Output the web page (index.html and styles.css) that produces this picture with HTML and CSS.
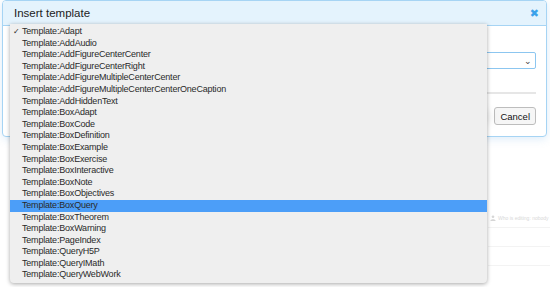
FILE: index.html
```html
<!DOCTYPE html>
<html lang="en">
<head>
    <meta charset="UTF-8">
    <title>Insert template</title>
    <link rel="stylesheet" href="styles.css">
</head>
<body>
    <!-- page behind the dialog -->
    <div class="page">
        <div class="row editing">
            <svg width="6" height="6" viewBox="0 0 8 8"><circle cx="4" cy="2.3" r="1.8" fill="#d6d6d6"/><path d="M0.5 8 C0.5 5 7.5 5 7.5 8 Z" fill="#d6d6d6"/></svg>
            Who is editing: nobody
        </div>
        <div class="row"></div>
        <div class="row"></div>
    </div>

    <!-- dialog -->
    <div class="dialog">
        <div class="dialog-header">
            <span class="title">Insert template</span>
            <span class="close">&#x2716;</span>
        </div>
        <div class="dialog-body">
            <div class="select"><span class="chev">&#x2304;</span></div>
            <div class="rule"></div>
            <div class="buttons">
                <button class="btn btn-insert">Insert</button>
                <button class="btn">Cancel</button>
            </div>
        </div>
        <div class="blur"></div>
    </div>

    <!-- open select menu -->
    <ul class="menu">
        <li class="checked">Template:Adapt</li>
        <li>Template:AddAudio</li>
        <li>Template:AddFigureCenterCenter</li>
        <li>Template:AddFigureCenterRight</li>
        <li>Template:AddFigureMultipleCenterCenter</li>
        <li>Template:AddFigureMultipleCenterCenterOneCaption</li>
        <li>Template:AddHiddenText</li>
        <li>Template:BoxAdapt</li>
        <li>Template:BoxCode</li>
        <li>Template:BoxDefinition</li>
        <li>Template:BoxExample</li>
        <li>Template:BoxExercise</li>
        <li>Template:BoxInteractive</li>
        <li>Template:BoxNote</li>
        <li>Template:BoxObjectives</li>
        <li class="hover">Template:BoxQuery</li>
        <li>Template:BoxTheorem</li>
        <li>Template:BoxWarning</li>
        <li>Template:PageIndex</li>
        <li>Template:QueryH5P</li>
        <li>Template:QueryIMath</li>
        <li>Template:QueryWebWork</li>
    </ul>
</body>
</html>
```

FILE: styles.css
```css
body {
    margin: 0;
    width: 550px;
    height: 287px;
    overflow: hidden;
    background: #fff;
    font-family: "Liberation Sans", Arial, sans-serif;
    position: relative;
}
.page {
    padding-top: 209px;
    padding-left: 488px;
}
.page .row {
    height: 18px;
    border-bottom: 1px solid #f3f3f3;
    font-size: 5px;
    color: #d8d8d8;
    display: flex;
    align-items: center;
    gap: 2px;
    padding-left: 2px;
    white-space: nowrap;
}
.dialog {
    position: absolute;
    left: 2px;
    top: 0;
    width: 543px;
    height: 135px;
    background: #fff;
    border: 1px solid #a6d4f4;
    border-radius: 4px;
    box-shadow: 0 2px 8px rgba(120, 180, 230, 0.25);
    overflow: hidden;
}
.dialog-header {
    height: 24px;
    background: #e4f3fd;
    border-bottom: 1px solid #a6d4f4;
    display: flex;
    align-items: center;
    justify-content: space-between;
    padding: 0 7px 0 11px;
}
.dialog-header .title {
    font-size: 11.5px;
    color: #222;
}
.dialog-header .close {
    font-size: 11px;
    font-weight: bold;
    color: #3ba1ea;
    font-family: "DejaVu Sans", sans-serif;
}
.dialog-body {
    padding: 26px 10px 0 12px;
}
.select {
    height: 15px;
    border: 1px solid #8cc6f0;
    border-radius: 2px;
    display: flex;
    justify-content: flex-end;
    align-items: center;
    padding-right: 3px;
}
.select .chev {
    font-size: 9px;
    color: #444;
    line-height: 6px;
}
.rule {
    margin-top: 23px;
    border-top: 2px solid #e6e6e6;
}
.buttons {
    margin-top: 13px;
    display: flex;
    justify-content: flex-end;
    gap: 9px;
}
.btn {
    height: 18px;
    padding: 0 5px;
    font-family: "Liberation Sans", Arial, sans-serif;
    font-size: 9.5px;
    color: #111;
    background: #f6f6f6;
    border: 1px solid #bdbdbd;
    border-radius: 3px;
}
.btn-insert {
    background: #555;
    color: #fff;
    border-color: #444;
}
.blur {
    position: absolute;
    left: 420px;
    top: 106px;
    width: 70px;
    height: 20px;
    border-radius: 50%;
    background: rgba(0, 0, 0, 0.07);
    filter: blur(5px);
}
.menu {
    position: absolute;
    left: 10px;
    top: 24px;
    width: 477px;
    height: 257px;
    margin: 0;
    padding: 2px 0 0 0;
    list-style: none;
    background: #efefef;
    border-radius: 0 0 4px 4px;
    box-shadow: 0 1px 4px rgba(0, 0, 0, 0.35);
}
.menu li {
    height: 11.6px;
    line-height: 11.6px;
    font-size: 9px;
    letter-spacing: -0.2px;
    color: #2a2a2a;
    padding-left: 12px;
    position: relative;
    white-space: nowrap;
}
.menu li.checked::before {
    content: "\2713";
    position: absolute;
    left: 3px;
    font-size: 8px;
    letter-spacing: 0;
    font-family: "DejaVu Sans", sans-serif;
}
.menu li.hover {
    background: #4c9ef8;
}
```
